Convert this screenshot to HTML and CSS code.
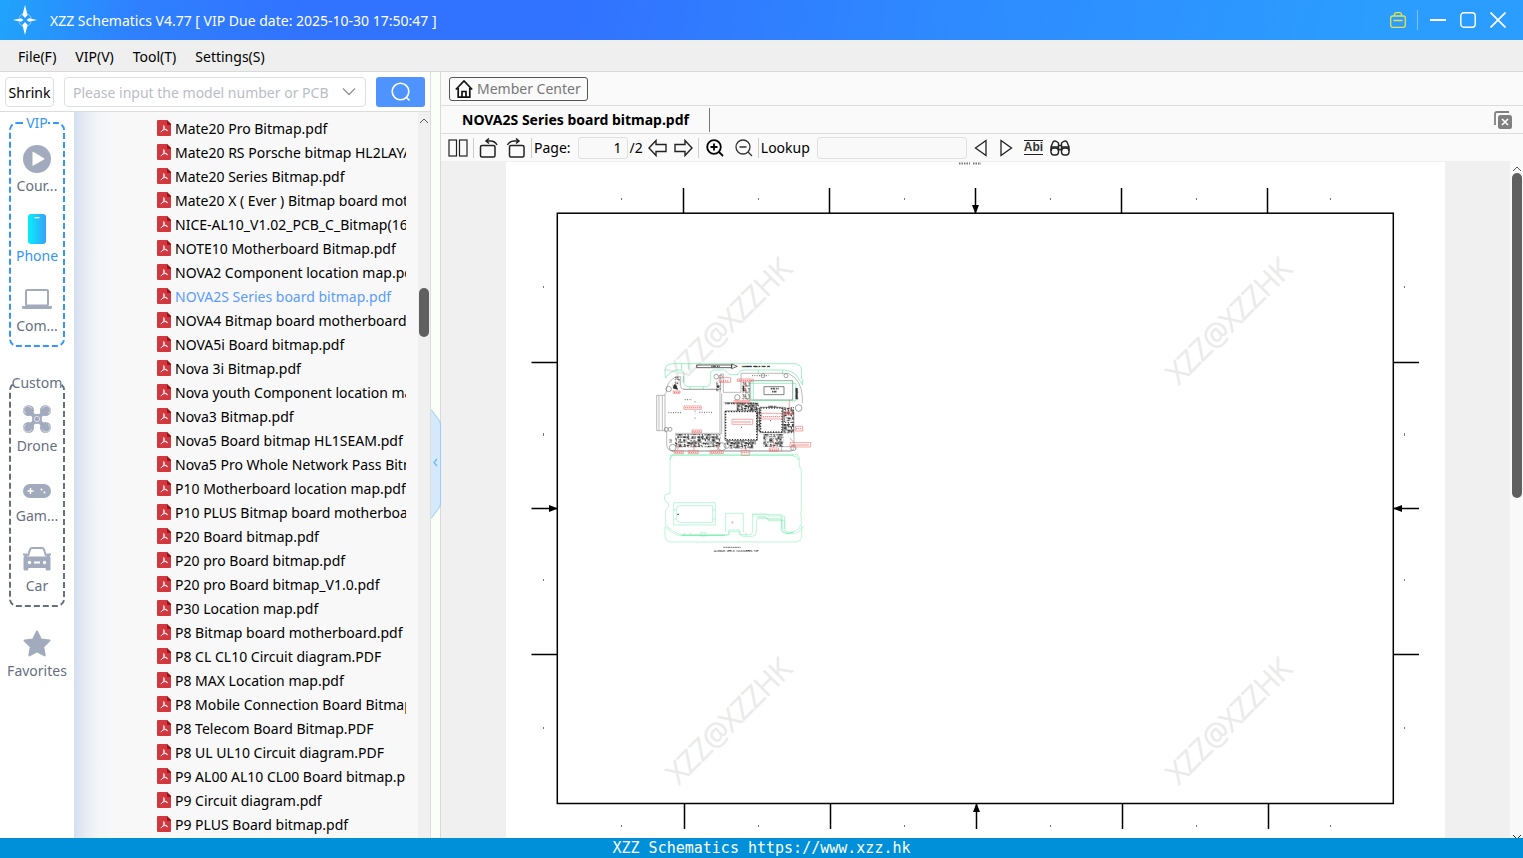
FILE: index.html
```html
<!DOCTYPE html>
<html lang="en">
<head>
<meta charset="utf-8">
<title>XZZ Schematics</title>
<link rel="stylesheet" href="styles.css">
</head>
<body>
<svg class="sprite" aria-hidden="true">
  <symbol id="pdf" viewBox="0 0 14 16">
    <path d="M1 0h9l4 4v11a1 1 0 0 1-1 1H1a1 1 0 0 1-1-1V1a1 1 0 0 1 1-1z" fill="#d2363e"/>
    <path d="M10 0l4 4v1h-3a1 1 0 0 1-1-1z" fill="#9d1119"/>
    <path d="M6.800 6c.5 1.700.3 3.800-2.800 5.800M6.800 6c-.2 2 1.200 3.800 3.700 4.700M5.500 10.300c1.300-.7 2.700-.9 4-.6" fill="none" stroke="#fff" stroke-width="1" stroke-linecap="round"/>
  </symbol>
</svg>

<header class="titlebar">
  <svg class="logo" width="26" height="30" viewBox="0 0 26 30" aria-hidden="true">
    <circle cx="13" cy="15" r="6.500" fill="none" stroke="#8fc6ff" stroke-width="1" stroke-dasharray="6 4.200" stroke-dashoffset="-2"/>
    <path d="M13 0l2.600 10-2.600 3-2.600-3zM13 30l2.600-10-2.600-3-2.600 3zM1 15l8-1.800L11.500 15 9 16.800zM25 15l-8-1.800L14.500 15l2.500 1.800z" fill="#fff"/>
  </svg>
  <h1 class="title">XZZ Schematics V4.77 [ VIP Due date: 2025-10-30 17:50:47 ]</h1>
  <button class="winbtn" aria-label="Toolbox">
    <svg width="16" height="16" viewBox="0 0 16 16" fill="none" stroke="#e6e34a" stroke-width="1.300"><rect x=".7" y="4" width="14.600" height="11.300" rx="2"/><path d="M4.500 4V2.700q0-2 2-2h3q2 0 2 2V4M3.500 8.500h9"/></svg>
  </button>
  <span class="winsep"></span>
  <button class="winbtn" aria-label="Minimize"><svg width="16" height="16" viewBox="0 0 16 16"><path d="M0 8h16" stroke="#fff" stroke-width="2"/></svg></button>
  <button class="winbtn" aria-label="Maximize"><svg width="16" height="16" viewBox="0 0 16 16"><rect x=".8" y=".8" width="14.400" height="14.400" rx="3" fill="none" stroke="#fff" stroke-width="1.400"/></svg></button>
  <button class="winbtn" aria-label="Close"><svg width="16" height="16" viewBox="0 0 16 16"><path d="M.5.5l15 15M15.500.5l-15 15" stroke="#fff" stroke-width="1.700"/></svg></button>
</header>

<nav class="menubar">
  <button>File(F)</button><button>VIP(V)</button><button>Tool(T)</button><button>Settings(S)</button>
</nav>

<div class="workspace">
  <section class="side">
    <div class="search">
      <button class="shrink">Shrink</button>
      <label class="combo">
        <input type="text" placeholder="Please input the model number or PCB" aria-label="Model number or PCB">
        <svg width="14" height="8" viewBox="0 0 14 8" aria-hidden="true"><path d="M1 .5l6 6 6-6" fill="none" stroke="#909399" stroke-width="1.400"/></svg>
      </label>
      <button class="go" aria-label="Search"><svg width="20" height="20" viewBox="0 0 20 20"><circle cx="9.500" cy="9.500" r="8.300" fill="none" stroke="#fff" stroke-width="1.600"/><path d="M15 15l3.500 3.500" stroke="#fff" stroke-width="1.600"/></svg></button>
    </div>
    <div class="browser">
      <nav class="rail">
        <div class="group vip">
          <svg class="dash" aria-hidden="true"><rect x="1" y="1" rx="7"/></svg>
          <h2><span>VIP</span></h2>
          <button><svg width="28" height="28" viewBox="0 0 28 28"><circle cx="14" cy="14" r="14" fill="#a2abbe"/><path d="M9.500 7.500q0-1 1-.5l10.500 6.200q1 .6 0 1.200L10.500 20.600q-1 .5-1-.5z" fill="#fff"/></svg>Cour...</button>
          <button class="on"><svg width="18" height="30" viewBox="0 0 18 30"><defs><linearGradient id="ph"><stop offset="0" stop-color="#05f0fb"/><stop offset="1" stop-color="#38a0fc"/></linearGradient></defs><rect width="18" height="30" rx="3" fill="url(#ph)"/><path d="M6.500 3.700h5" stroke="#fff" stroke-width="1.200"/></svg>Phone</button>
          <button><svg width="30" height="20" viewBox="0 0 30 20"><rect x="4" y="1" width="22" height="15.500" rx="1" fill="none" stroke="#a2abbe" stroke-width="2"/><path d="M0 17h30v1.500q0 1.500-1.500 1.500h-27Q0 20 0 18.500z" fill="#a2abbe"/></svg>Com...</button>
        </div>
        <div class="group custom">
          <svg class="dash" aria-hidden="true"><rect x="1" y="1" rx="7"/></svg>
          <h2><span>Custom</span></h2>
          <button><svg width="28" height="28" viewBox="0 0 28 28"><g fill="#a2abbe"><circle cx="5.500" cy="5.500" r="5.500"/><circle cx="22.500" cy="5.500" r="5.500"/><circle cx="5.500" cy="22.500" r="5.500"/><circle cx="22.500" cy="22.500" r="5.500"/><circle cx="14" cy="14" r="5"/></g><path d="M6 6l16 16M22 6L6 22" stroke="#a2abbe" stroke-width="4"/><g fill="none" stroke="#e6e9f0" stroke-width=".8"><path d="M3 8.500a4 4 0 1 1 5.500-5M25 8.500a4 4 0 1 0-5.500-5M3 19.500a4 4 0 1 0 5.500 5M25 19.500a4 4 0 1 1-5.500 5"/><circle cx="14" cy="14" r="2.700"/></g></svg>Drone</button>
          <button><svg width="28" height="18" viewBox="0 0 28 18"><rect y="4" width="28" height="14" rx="7" fill="#a2abbe"/><path d="M4.500 11h6M7.500 8v6" stroke="#fff" stroke-width="1.400"/><circle cx="18.500" cy="9.500" r="1" fill="#fff"/><circle cx="21.500" cy="12.500" r="1" fill="#fff"/></svg>Gam...</button>
          <button><svg width="28" height="24" viewBox="0 0 28 24"><path d="M5 9l2-6.500Q7.500 1 9 1h10q1.500 0 2 1.500L23 9" fill="none" stroke="#a2abbe" stroke-width="2"/><path d="M0 6.500h4.500v3h19v-3H28v2h-1.500q1 1.500 1 3V22q0 1.500-1.500 1.500h-2q-1.500 0-1.500-2.500h-17q0 2.500-1.500 2.500H2Q.5 23.500.5 22V11.500q0-1.500 1-3H0z" fill="#a2abbe"/><g fill="#fff"><circle cx="6.500" cy="15.500" r="1.700"/><circle cx="21.500" cy="15.500" r="1.700"/><rect x="11" y="14.500" width="6" height="2"/></g></svg>Car</button>
        </div>
        <button class="fav"><svg width="28" height="28" viewBox="0 0 28 28"><path d="M14 1.500l3.900 7.900 8.600 1.200-6.300 6.100 1.500 8.700-7.700-4.100-7.700 4.100 1.500-8.700-6.300-6.100 8.600-1.200z" fill="#a2abbe" stroke="#a2abbe" stroke-width="2" stroke-linejoin="round"/></svg>Favorites</button>
      </nav>
      <div class="tree">
        <ul class="files">
          <li><svg><use href="#pdf"/></svg>Mate20 Pro Bitmap.pdf</li>
          <li><svg><use href="#pdf"/></svg>Mate20 RS Porsche bitmap HL2LAYA.pdf</li>
          <li><svg><use href="#pdf"/></svg>Mate20 Series Bitmap.pdf</li>
          <li><svg><use href="#pdf"/></svg>Mate20 X ( Ever ) Bitmap board motherboard.pdf</li>
          <li><svg><use href="#pdf"/></svg>NICE-AL10_V1.02_PCB_C_Bitmap(16).pdf</li>
          <li><svg><use href="#pdf"/></svg>NOTE10 Motherboard Bitmap.pdf</li>
          <li><svg><use href="#pdf"/></svg>NOVA2 Component location map.pdf</li>
          <li class="on"><svg><use href="#pdf"/></svg>NOVA2S Series board bitmap.pdf</li>
          <li><svg><use href="#pdf"/></svg>NOVA4 Bitmap board motherboard.pdf</li>
          <li><svg><use href="#pdf"/></svg>NOVA5i Board bitmap.pdf</li>
          <li><svg><use href="#pdf"/></svg>Nova 3i Bitmap.pdf</li>
          <li><svg><use href="#pdf"/></svg>Nova youth Component location map.pdf</li>
          <li><svg><use href="#pdf"/></svg>Nova3 Bitmap.pdf</li>
          <li><svg><use href="#pdf"/></svg>Nova5 Board bitmap HL1SEAM.pdf</li>
          <li><svg><use href="#pdf"/></svg>Nova5 Pro Whole Network Pass Bitmap.pdf</li>
          <li><svg><use href="#pdf"/></svg>P10 Motherboard location map.pdf</li>
          <li><svg><use href="#pdf"/></svg>P10 PLUS Bitmap board motherboard.pdf</li>
          <li><svg><use href="#pdf"/></svg>P20 Board bitmap.pdf</li>
          <li><svg><use href="#pdf"/></svg>P20 pro Board bitmap.pdf</li>
          <li><svg><use href="#pdf"/></svg>P20 pro Board bitmap_V1.0.pdf</li>
          <li><svg><use href="#pdf"/></svg>P30 Location map.pdf</li>
          <li><svg><use href="#pdf"/></svg>P8 Bitmap board motherboard.pdf</li>
          <li><svg><use href="#pdf"/></svg>P8 CL CL10 Circuit diagram.PDF</li>
          <li><svg><use href="#pdf"/></svg>P8 MAX Location map.pdf</li>
          <li><svg><use href="#pdf"/></svg>P8 Mobile Connection Board Bitmap.pdf</li>
          <li><svg><use href="#pdf"/></svg>P8 Telecom Board Bitmap.PDF</li>
          <li><svg><use href="#pdf"/></svg>P8 UL UL10 Circuit diagram.PDF</li>
          <li><svg><use href="#pdf"/></svg>P9 AL00 AL10 CL00 Board bitmap.pdf</li>
          <li><svg><use href="#pdf"/></svg>P9 Circuit diagram.pdf</li>
          <li><svg><use href="#pdf"/></svg>P9 PLUS Board bitmap.pdf</li>
        </ul>
        <div class="scroll list-scroll"><svg width="10" height="6" viewBox="0 0 10 6"><path d="M1 5l4-4 4 4" fill="none" stroke="#555"/></svg><span class="thumb"></span></div>
      </div>
    </div>
  </section>

  <div class="splitter">
    <button aria-label="Collapse panel"><svg width="10" height="110" viewBox="0 0 10 110"><path d="M0 .5L8 11q1.500 2 1.500 4v80q0 2-1.500 4L0 109.500" fill="#d5e9fd" stroke="#9ccdf3"/><path d="M6 50l-3 3.500 3 3.500" fill="none" stroke="#6db9f2" stroke-width="1.300"/></svg></button>
  </div>

  <main class="doc">
    <div class="crumbs">
      <button class="member"><svg width="18" height="18" viewBox="0 0 18 18" fill="none" stroke="#111" stroke-width="1.700"><path d="M.8 9.500L9 1l8.200 8.500M3.200 8v9.100h11.600V8M7 17v-5.500h4V17"/></svg>Member Center</button>
    </div>
    <div class="tabs">
      <button class="tab">NOVA2S Series board bitmap.pdf</button>
      <button class="closeall" aria-label="Close all"><svg width="18" height="18" viewBox="0 0 18 18"><path d="M1 14V3q0-2 2-2h12" fill="none" stroke="#808080" stroke-width="1.800"/><rect x="4" y="4" width="14" height="14" rx="2.500" fill="#808080"/><path d="M8 8l6 6M14 8l-6 6" stroke="#fff" stroke-width="1.700"/></svg></button>
    </div>
    <div class="toolbar">
      <button aria-label="Two pages"><svg width="20" height="18" viewBox="0 0 20 18" fill="none" stroke="#222" stroke-width="1.200"><rect x="1" y="1" width="7.500" height="16"/><rect x="11.500" y="1" width="7.500" height="16"/></svg></button>
      <i class="bar"></i>
      <button aria-label="Rotate left"><svg width="20" height="20" viewBox="0 0 20 20" fill="none" stroke="#222" stroke-width="1.500"><rect x="1.500" y="7.500" width="14.500" height="11.500" rx="1.500"/><path d="M7 3h4.500q4.500 0 6.500 4M10 .5L7 3l3 2.500"/></svg></button>
      <button class="near" aria-label="Rotate right"><svg width="20" height="20" viewBox="0 0 20 20" fill="none" stroke="#222" stroke-width="1.500"><rect x="3.500" y="7.500" width="14.500" height="11.500" rx="1.500"/><path d="M13 3H8Q3.500 3 1.500 7M10 .5L13 3l-3 2.500"/></svg></button>
      <i class="bar tight"></i>
      <label class="page">Page:<input type="text" value="1"></label><span class="total">/2</span>
      <button aria-label="Previous page"><svg width="20" height="18" viewBox="0 0 20 18" fill="none" stroke="#222" stroke-width="1.400"><path d="M1 9l7-7.500V5.500h10v7H8v4z"/></svg></button>
      <button aria-label="Next page"><svg width="20" height="18" viewBox="0 0 20 18" fill="none" stroke="#222" stroke-width="1.400"><path d="M19 9l-7-7.500V5.500H2v7h10v4z"/></svg></button>
      <i class="bar"></i>
      <button class="near" aria-label="Zoom in"><svg width="18" height="18" viewBox="0 0 18 18" fill="none" stroke="#000" stroke-width="1.800"><circle cx="8" cy="8" r="6.800"/><path d="M13 13l4 4M4.500 8h7M8 4.500v7"/></svg></button>
      <button class="far" aria-label="Zoom out"><svg width="18" height="18" viewBox="0 0 18 18" fill="none" stroke="#333" stroke-width="1.300"><circle cx="8" cy="8" r="7"/><path d="M13 13l4 4M4.500 8h7"/></svg></button>
      <i class="bar tight"></i>
      <label class="lookup">Lookup<input type="text"></label>
      <button class="near" aria-label="Find previous"><svg width="14" height="18" viewBox="0 0 14 18" fill="none" stroke="#222" stroke-width="1.300"><path d="M12 1.500v15L1.500 9z"/></svg></button>
      <button class="far" aria-label="Find next"><svg width="14" height="18" viewBox="0 0 14 18" fill="none" stroke="#222" stroke-width="1.300"><path d="M2 1.500v15L12.500 9z"/></svg></button>
      <button class="abi far">Abi</button>
      <button class="near" aria-label="Find"><svg width="20" height="16" viewBox="0 0 20 16" fill="none" stroke="#222" stroke-width="1.400"><rect x="1" y="8" width="7.500" height="7" rx="3"/><rect x="11.500" y="8" width="7.500" height="7" rx="3"/><path d="M1 11V7l2-5q1.500-1.800 3.500-.5L8.500 3v8M19 11V7l-2-5q-1.500-1.800-3.500-.5L11.500 3v8M8.500 5.500h3M8.500 9.500h3M1.500 7h7M11.500 7h7"/></svg></button>
    </div>
    <div class="viewer">
      <div class="sheetwrap">
      <svg class="sheet" viewBox="506 162 939 676" preserveAspectRatio="xMidYMin slice" role="img" aria-label="NOVA2S board bitmap">
        <defs>
          <pattern id="noise" width="43" height="37" patternUnits="userSpaceOnUse"><path d="M1 1h5v3H1zM8 0v7M11 2h9M11 5h5v5M2 9h7v4H2zM18 8h6v8M27 1h4v6h-4zM34 3h8M36 6v7M30 11h5M1 17h12M4 20v6h5M14 19h7v3h-7zM24 19v9M28 17h9v6h-9zM40 15v9M1 30h6v4M11 27h8M12 31h4v5M21 32h9v3M33 27h4v7h-4zM40 29v6" fill="none" stroke="#1a1a1a" stroke-width="2.800"/></pattern>
          <pattern id="tiny" width="17" height="19" patternUnits="userSpaceOnUse"><path d="M1 1h6M3 5h3v5M10 2v6h4M1 13h5M9 12h6v4" fill="none" stroke="#222" stroke-width="2"/></pattern>
        </defs>
        <g class="mark">
          <text transform="translate(728 320) rotate(-45)">XZZ@XZZHK</text>
          <text transform="translate(1228 320) rotate(-45)">XZZ@XZZHK</text>
          <text transform="translate(728 720) rotate(-45)">XZZ@XZZHK</text>
          <text transform="translate(1228 720) rotate(-45)">XZZ@XZZHK</text>
        </g>
        <path d="M959 163.500h11M973 163.500h8" stroke="#777" stroke-width="2" stroke-dasharray="1.500 1"/>
        <g fill="none" stroke="#000" stroke-width="1.500">
          <rect x="557.300" y="213.200" width="836" height="590.300"/>
          <path d="M683.500 188v25M829.500 188v25M975.500 188v25M1121.500 188v25M1267.500 188v25M684.500 804v25M830.500 804v25M976.500 804v25M1122.500 804v25M1268.500 804v25M531.500 362.500H557M531.500 508.500H557M531.500 654.500H557M1393 362.500h26M1393 508.500h26M1393 654.500h26"/>
        </g>
        <path d="M972 205h7l-3.500 9zM973 812h7l-3.500-9zM549 505v7l9-3.500zM1402 505v7l-9-3.500z"/>
        <path d="M621.500 198v2M758.500 198v2M904.500 198v2M1050.500 198v2M1196.500 198v2M1330.500 198v2M621.500 825v2M758.500 825v2M904.500 825v2M1050.500 825v2M1196.500 825v2M1330.500 825v2M543.500 286v2M543.500 433v3M543.500 579v2M543.500 727v2M1404.500 286v2M1404.500 433v3M1404.500 579v2M1404.500 727v2" stroke="#777"/>

        <g transform="translate(640 350) scale(.3333)" fill="none" stroke-width="2">
          <path stroke="#6eeaa8" d="M75 60q0-18 25-19h365q20 2 20 22v25M75 60q0 10 2 24 14-22 33-24h10q10 0 12 12v28q2 10 12 10h55q12 0 12-12V70q2-10 12-10h30q10 8 15 14h25q5-14 20-14h110q30 0 45 15l20 30V88M125 41v18M145 41v18M150 110v8M190 110v8M90 316h360M100 316q-8 0-10 14M450 316q20 0 26 14M355 60v14M428 60v14M328 100h140v52H328zM340 92h118v58H340z"/>
          <path stroke="#999" d="M78 130q0-35 30-50h14v30q0 8 10 8h110V72h8v55h53V70h142q40 20 42 70v20M462 185v105q0 13-12 13H100q-20 0-20-20v-38h-5V130M75 136H50v106h25M57 136v106M67 136v106M130 118h110v130M105 250h140M130 78v20M332 92h126v58H332zM95 303h360M245 130v120M250 158h55M430 170v80M425 305V290h40"/>
          <path stroke="#444" d="M255 183h97v88h-97zM360 172h68v76h-68zM372 110h60v24h-60z"/>
          <path stroke="#222" stroke-width="4" stroke-dasharray="3 5" d="M257 185h93v84h-93zM362 174h64v72h-64z"/>
          <path stroke="#111" d="M170 45h105v8H170z"/><path stroke="#222" d="M275 42l17 7-17 7z"/>
          <path stroke="#555" stroke-width="5" stroke-dasharray="4 1.500 8 3" d="M214 49h25M392 116h24M396 125h16M385 170h24M256 160h90"/>
          <path stroke="#666" stroke-width="3" stroke-dasharray="3 4" d="M85 188h38M178 187h38M134 149h22M165 154v5M165 182v8M165 203v5M336 77h50M303 232h6M390 212h6"/>
          <g stroke="#777"><circle cx="86" cy="117" r="8"/><circle cx="229" cy="80" r="7"/><circle cx="242" cy="80" r="5"/><circle cx="292" cy="142" r="8"/><circle cx="369" cy="77" r="6"/><circle cx="438" cy="77" r="6"/><circle cx="476" cy="174" r="10"/><circle cx="79" cy="238" r="6"/><circle cx="90" cy="238" r="6"/><circle cx="98" cy="293" r="10"/><circle cx="246" cy="290" r="12"/><circle cx="260" cy="287" r="8"/><circle cx="460" cy="294" r="8"/></g>
          <path fill="url(#noise)" d="M105 252h136v40H105zM268 272h72v24h-72zM370 252h60v38h-60zM430 172h32v78h-32zM350 175h10v70h-10zM258 272h90v12h-90zM290 158h66v24h-66z"/>
          <path fill="url(#tiny)" d="M98 98l8-2 10 22H98zM104 80h16v22h-16zM228 92h14v32h-14zM306 95h24v56h-24zM466 112h9v38h-9zM88 266h7v14h-7zM330 165h28v16h-28zM452 168h10v30h-10z"/>
          <path fill="#333" d="M98 115l6-14 6 6 4 12zM308 108h5v16h-5zM467 114h6v34h-6zM230 107h8v6h-8z"/>
          <path stroke="#fff" stroke-width="3" d="M112 266h26v14h-26zM150 256h20v12h-20zM186 276h24v10h-24zM380 262h24v18h-24zM436 200h18v14h-18z"/>
          <path stroke="#f37a7a" d="M132 168h52v10h-52zM100 123h20v7h-20zM238 83h34v14h-34zM292 87h48v7h-48zM282 151h48v8h-48zM276 208h62v15h-62zM364 190h62v17h-62zM432 186h26v8h-26zM156 240h29v8h-29zM466 229h22v14h-22zM450 278h62v13h-62zM103 302h27v9h-27zM145 302h30v9h-30zM210 302h40v9h-40zM304 301h25v15h-25zM388 294h28v10h-28zM117 280l-4 20M162 278v22M232 280v20M317 290v12M400 270v24M450 264l12 14M448 180v-30"/>
          <path stroke="#ee4a4a" stroke-width="4" stroke-dasharray="4 2" opacity=".6" d="M135 173h46M102 127h16M242 93h25M296 91h42M286 155h42M280 216h54M368 200h54M434 190h22M158 244h25M468 236h18M454 285h54M105 307h23M147 307h26M212 307h36M306 308h20M390 300h24M317 95v40"/>
          <text class="silk" x="306" y="52">ALUMNUM VER.D TOP BT</text>
        </g>
        <g transform="translate(640 445) scale(.3333)" fill="none" stroke-width="2">
          <path stroke="#9af2c4" d="M90 145V42q0-14 14-14h360q14 0 14 14v24q6 0 6 8v126q-5 8 0 16v20q-8 24-34 26-20 0-22-14v-30h-4v-9h-86v50q0 10-10 10h-30v-14h-32v14H125q-30-8-48-30v-45q10-6 10-14t-10-10q-4-6-4-14l2-7 15-4M75 245v26q0 20 20 20h370q20 0 20-20v-28M75 245q15 18 42 27h140q12 0 12-12h30q0 12 10 14h28q12 0 12-12v-32q0-10 10-10h25v7h50v20q0 20 22 20 26-4 35-24M101 173h125v67H101zM120 182h98v50h-98q-10 0-10-10v-30q0-10 10-10zM101 195h9M101 222h9M218 195h9M218 222h9M257 262v-57h53v57M337 215v-8h45l4 6h48v38M133 262v10M152 262v10M182 262h15v11h-15zM318 263v11"/>
          <path stroke="#5fe79e" d="M125 271h130M350 216h26l6 6h42v32q2 10 16 12l20-4"/>
          <path stroke="#f59ac0" d="M273 232h8M277 228v8"/>
          <path stroke="#333" stroke-width="3" d="M112 208h5"/>
          <path stroke="#333" stroke-width="2" stroke-dasharray="6 1" d="M250 307h52"/>
          <text class="silk wide" x="222" y="322">ALUMNUM VER.D SILKSCREEN TOP</text>
        </g>
      </svg>
      </div>
      <div class="scroll doc-scroll"><svg width="10" height="6" viewBox="0 0 10 6"><path d="M1 5l4-4 4 4" fill="none" stroke="#555"/></svg><span class="thumb"></span><svg class="down" width="10" height="4" viewBox="0 0 10 4"><path d="M1 1l4 4 4-4" fill="none" stroke="#333"/></svg></div>
    </div>
  </main>
</div>

<footer class="status">XZZ Schematics https://www.xzz.hk</footer>
</body>
</html>
```

FILE: styles.css
```css
* { box-sizing: border-box; }
body {
  margin: 0;
  height: 100vh;
  display: flex;
  flex-direction: column;
  overflow: hidden;
  font: 14px/20px "Noto Sans", "Open Sans", sans-serif;
  color: #000;
  background: #fff;
}
button { font: inherit; color: inherit; background: none; border: 0; padding: 0; }
input { font: inherit; color: inherit; min-width: 0; }
svg { display: block; flex: none; }
.sprite { position: absolute; width: 0; height: 0; }

.titlebar {
  flex: none;
  height: 40px;
  display: flex;
  align-items: center;
  padding: 0 17px 0 12px;
  background: linear-gradient(100deg, #20a4fb 0, #2f80ff 9%, #3173ff 20%, #3173ff 38%, #2e8cff 65%, #2b9dff 90%);
  color: #fff;
}
.title { flex: 1; margin: 0 0 0 12px; padding-top: 2px; font-size: 14px; font-weight: 400; }
.winbtn { margin-left: 14px; }
.winsep { width: 1px; height: 20px; margin: 0 -2px 0 11px; background: #7fc0ff; }

.menubar {
  flex: none;
  height: 32px;
  display: flex;
  align-items: center;
  gap: 19px;
  padding: 2px 0 0 18px;
  background: #efefef;
  border-bottom: 1px solid #d9d9d9;
}

.workspace { flex: 1; min-height: 0; display: flex; }
.side { flex: none; width: 431px; display: flex; flex-direction: column; border-right: 1px solid #dcdcdc; }
.search {
  flex: none;
  height: 40px;
  display: flex;
  align-items: center;
  padding: 0 5px;
  border-bottom: 1px solid #dcdcdc;
}
.shrink { width: 49px; height: 30px; padding-top: 2px; border: 1px solid #dcdfe6; border-radius: 4px; }
.combo {
  flex: 1;
  height: 30px;
  display: flex;
  align-items: center;
  margin: 0 10px;
  padding: 0 9px 0 8px;
  border: 1px solid #dcdfe6;
  border-radius: 4px;
}
.combo input { flex: 1; border: 0; padding: 2px 0 0; outline: 0; background: none; }
.combo input::placeholder { color: #b9bdc6; }
.combo svg { margin-left: 8px; }
.go { width: 49px; height: 30px; display: grid; place-items: center; background: #4f94fe; border-radius: 3px; }

.browser { flex: 1; min-height: 0; display: flex; }
.rail { flex: none; width: 74px; padding: 10px 9px 0; color: #666f80; }
.group { position: relative; height: 225px; width: 56px; }
.dash { position: absolute; inset: 0; width: 100%; height: 100%; }
.dash rect {
  width: calc(100% - 2px);
  height: calc(100% - 2px);
  fill: none;
  stroke: currentColor;
  stroke-width: 2;
  stroke-dasharray: 6 3;
}
.vip .dash, .vip h2, .rail .on { color: #3296fa; }
.custom { margin-top: 35px; }
.group h2 { position: relative; height: 16px; margin: 0; font-size: 14px; font-weight: 400; line-height: 2px; text-align: center; white-space: nowrap; }
.group h2 span { display: inline-block; margin: 0 -4px; background: #fff; }
.rail button {
  position: relative;
  width: 56px;
  height: 70px;
  display: grid;
  grid-template-rows: 38px 16px;
  place-items: center;
  align-content: start;
  padding-top: 2px;
  line-height: 16px;
}
.rail .fav { width: 64px; margin: 16px -4px 0; }

.tree { flex: 1; min-width: 0; display: flex; background: linear-gradient(90deg, #d5dff0 0, #e8ecf4 12px, #f3f5f8 24px, #f8f8f8 40px); }
.files { flex: 1; min-width: 0; margin: 0 12px 0 83px; padding: 4px 0 0; list-style: none; overflow: hidden; }
.files li { height: 24px; display: flex; align-items: center; gap: 4px; padding-top: 2px; white-space: nowrap; }
.files svg { width: 14px; height: 16px; margin-bottom: 2px; }
.files .on { color: #5a9cff; }

.scroll { flex: none; display: flex; flex-direction: column; align-items: center; }
.thumb { width: 10px; border-radius: 5px; background: #606060; }
.list-scroll { width: 12px; padding-top: 6px; background: #f0f0f0; }
.list-scroll .thumb { height: 49px; margin-top: 164px; }

.splitter { flex: none; width: 10px; display: flex; align-items: center; background: #fafff8; border-right: 1px solid #d9d9d9; }
.splitter button { margin-top: 18px; }

.doc { flex: 1; min-width: 0; display: flex; flex-direction: column; background: #fafafa; }
.crumbs { flex: none; height: 34px; padding: 5px 8px; border-bottom: 1px solid #dcdcdc; }
.member { height: 24px; display: flex; align-items: center; gap: 4px; padding: 0 6px 0 5px; border: 1px solid #555; border-radius: 3px; color: #777; }
.tabs { flex: none; height: 28px; display: flex; justify-content: space-between; align-items: center; padding-right: 11px; border-bottom: 1px solid #dcdcdc; }
.tab { height: 24px; padding: 0 20px 0 21px; border-right: 1px solid #777; font-weight: 700; }
.toolbar { flex: none; height: 27px; display: flex; align-items: center; padding-left: 7px; gap: 5px; }
.toolbar .near { margin-left: 2px; }
.toolbar .far { margin-left: 6px; }
.bar { width: 1px; height: 20px; background: #ccc; }
.bar.tight { margin-right: -3px; }
.page, .lookup { display: flex; align-items: center; gap: 7px; }
.page input, .lookup input { height: 22px; border: 1px solid #e0e0e0; border-radius: 3px; background: #f9f9f9; }
.page input { width: 50px; text-align: right; padding: 0 5px; }
.lookup input { width: 150px; }
.total { margin-left: -3px; }
.abi { border-top: 1px solid #222; border-bottom: 1px solid #222; font: 700 12px/13px "Liberation Sans", sans-serif; color: #333; }

.viewer { flex: 1; min-height: 0; display: flex; background: #f0f0f0; }
.sheetwrap { flex: 1; min-width: 0; padding: 1px 65px 0; }
.sheet { width: 100%; height: 100%; background: #fff; }
.mark text { font: 300 29px "Open Sans", "Noto Sans", sans-serif; fill: #ebebeb; stroke: #ebebeb; stroke-width: 1px; text-anchor: middle; dominant-baseline: central; }
.silk { font: 7px "Liberation Mono", monospace; fill: #000; stroke: #222; stroke-width: 1px; }
.silk.wide { font-size: 8px; stroke: none; }
.doc-scroll { width: 13px; padding-top: 5px; background: #f9f9f9; }
.doc-scroll .thumb { height: 325px; margin-top: 1px; }
.doc-scroll .down { margin-top: auto; }

.status {
  flex: none;
  height: 20px;
  background: #0090d9;
  color: #fff;
  font: 15px/20px "DejaVu Sans Mono", monospace;
  text-align: center;
}
```
